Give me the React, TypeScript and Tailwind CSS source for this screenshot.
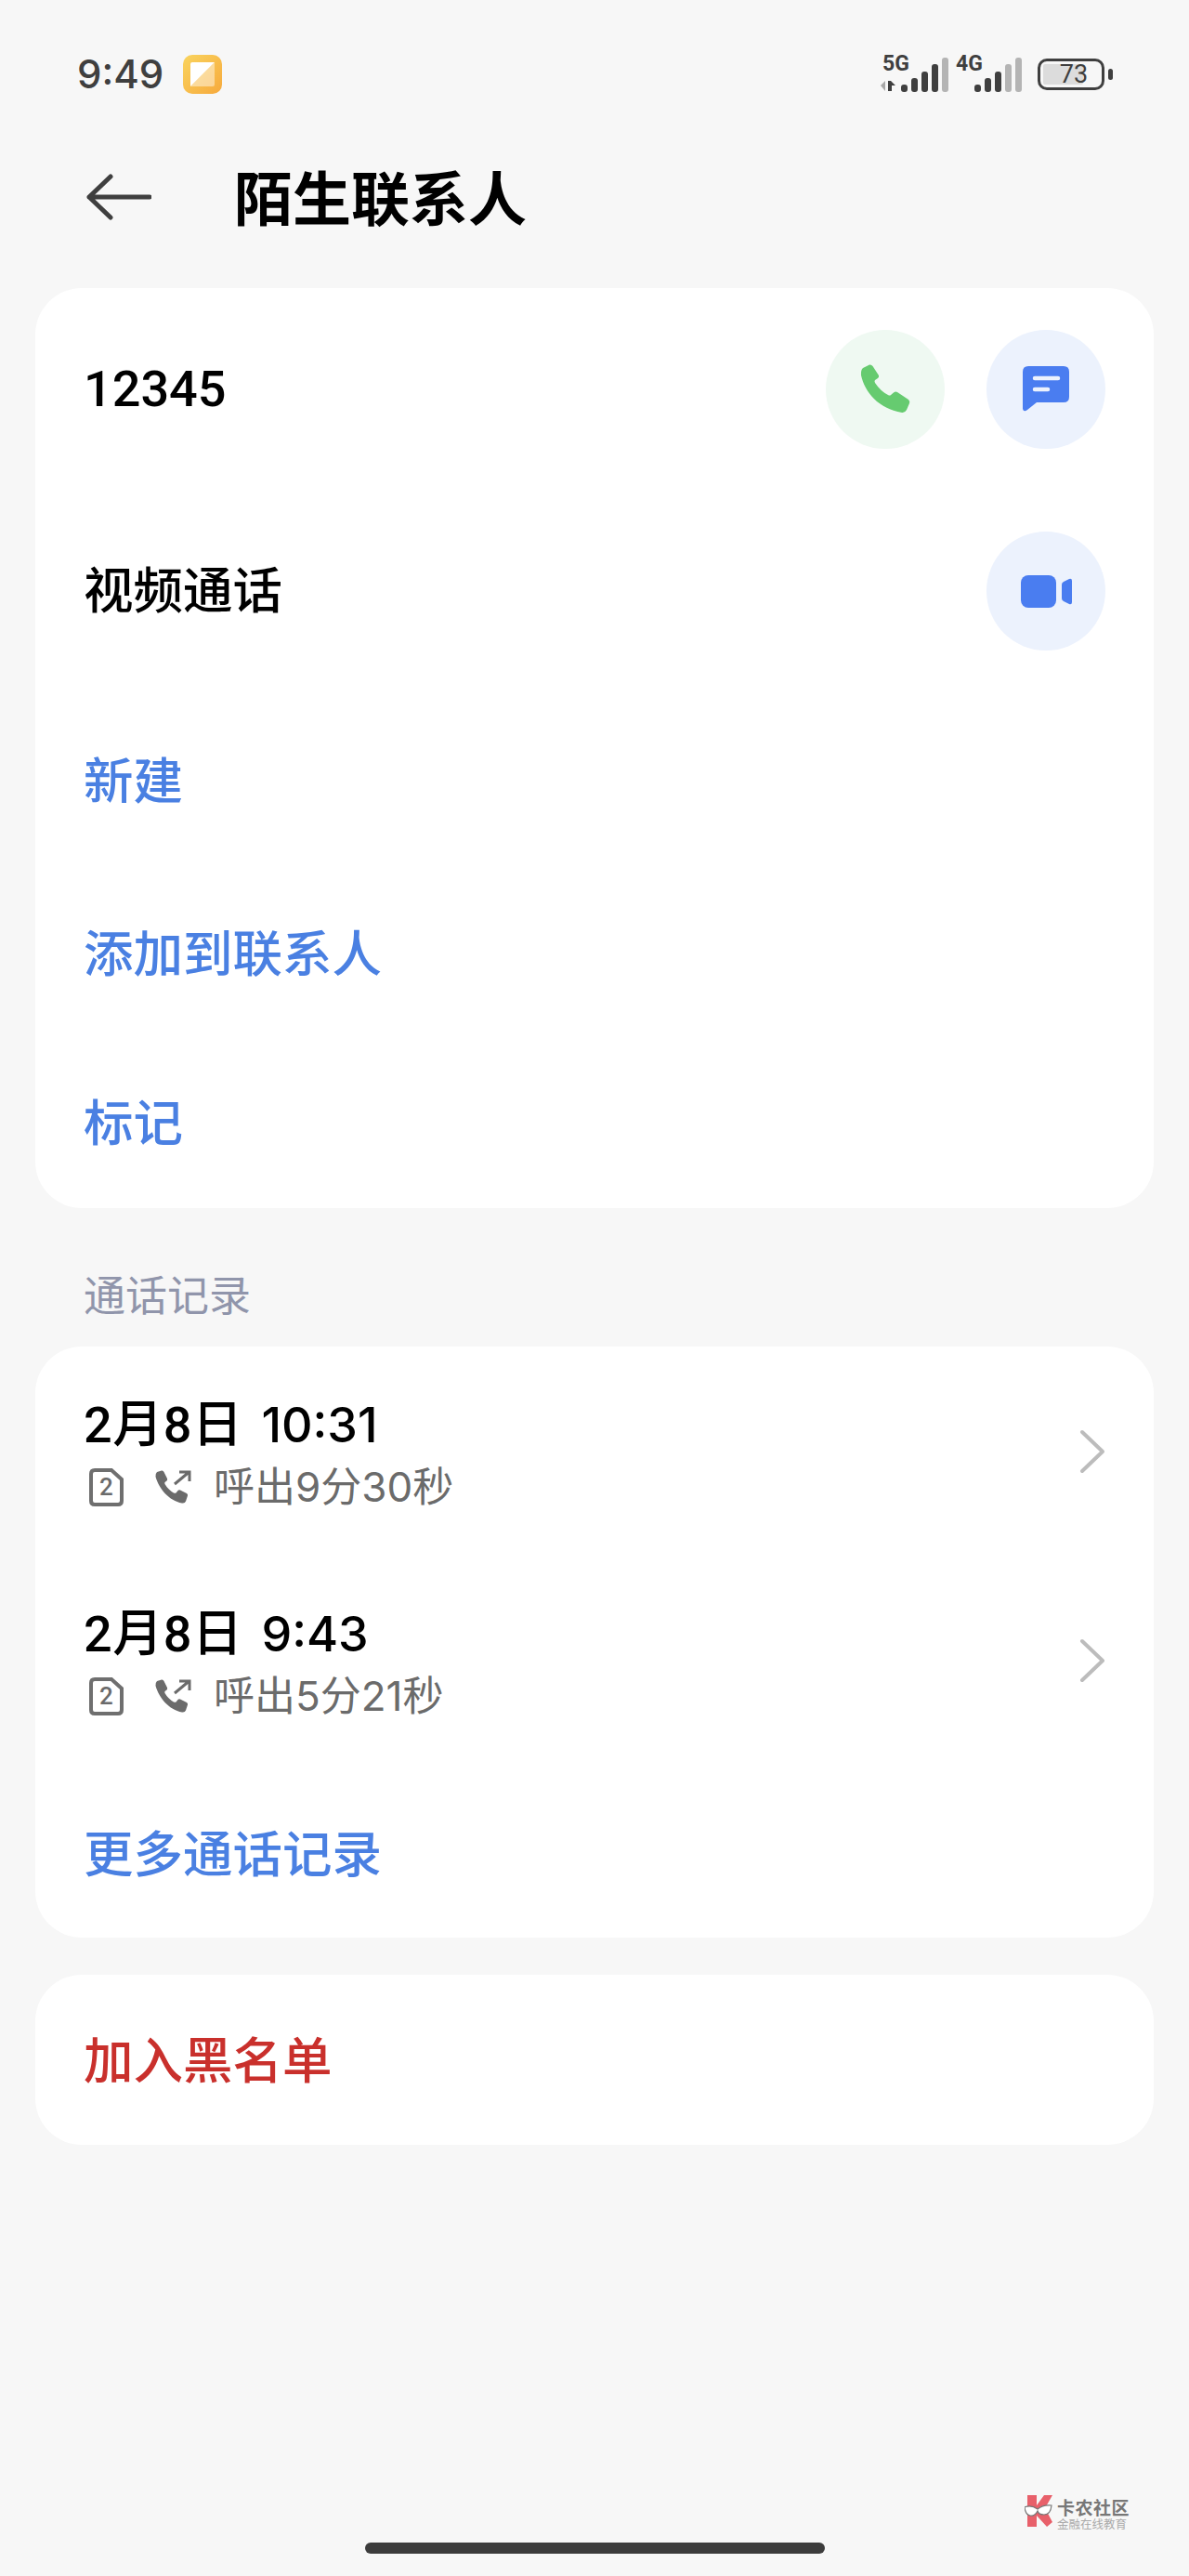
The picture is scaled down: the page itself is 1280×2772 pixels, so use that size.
const Phone = ({ className }: { className?: string }) => (
  <svg viewBox="0 0 54 53" className={className} fill="currentColor">
    <path d="M3 4L10 .5Q12 0 13.5 2L20 12Q20.5 14 19 15L16 17Q15 18 16 20Q22 29 30 33Q32 34 33 33L36 30.5Q38 29 40 30L52 38Q54 40 53 42L50 49Q48 52.5 45 52C20 48 5 30 1 12Q.5 6 3 4Z" />
  </svg>
);

const Circle = ({ tone, children }: { tone: string; children: React.ReactNode }) => (
  <div className={`flex h-[128px] w-[128px] items-center justify-center rounded-full ${tone}`}>{children}</div>
);

const Signal = ({ label, dark, arrows }: { label: string; dark: number; arrows?: boolean }) => {
  const bars = [
    { x: 23, y: 29 },
    { x: 34, y: 22 },
    { x: 45, y: 15 },
    { x: 56, y: 7 },
    { x: 67, y: 0 },
  ];
  return (
    <div className="relative h-[37px] w-[75px]">
      <span className="absolute left-[3px] top-[-5px] text-[23px] leading-[24px] font-bold text-[#3f3f3f]">{label}</span>
      <svg viewBox="0 0 75 37" className="absolute inset-0 h-full w-full">
        {arrows && (
          <>
            <path d="M6 25V36L1 30Z" fill="#a8a8a8" />
            <path d="M9 36V25H12L17 30H13V36Z" fill="#3f3f3f" />
          </>
        )}
        {bars.map((b, i) => (
          <rect key={i} x={b.x} y={b.y} width="7" height={37 - b.y} rx="3" fill={i < dark ? "#3f3f3f" : "#b4b4b4"} />
        ))}
      </svg>
    </div>
  );
};

const Battery = () => (
  <div className="flex items-center gap-[4px]">
    <div className="relative h-[34px] w-[72px] rounded-[10px] border-[3px] border-[#3f3f3f] p-[3px]">
      <div className="h-full w-[43px] rounded-[2px] bg-[#dcdcdc]" />
      <span className="absolute inset-0 flex items-center justify-center pl-[6px] text-[27px] leading-none text-[#3f3f3f]">73</span>
    </div>
    <div className="h-[12px] w-[5px] rounded-full bg-[#3f3f3f]" />
  </div>
);

const CallRow = ({ date, time, detail }: { date: string; time: string; detail: string }) => (
  <div className="flex h-[225px] items-start justify-between pl-[52px] pr-[52px] pt-[51px]">
    <div>
      <div className="flex h-[67px] items-center text-[54px] leading-[67px] font-medium tracking-[0.5px] text-black">
        <span>{date}</span>
        <span className="ml-[20px] font-['Inter','Roboto',sans-serif] text-[52px] tracking-normal">{time}</span>
      </div>
      <div className="flex h-[66px] items-center text-[44px] leading-[66px] text-[#6b6b6b]">
        <div className="relative ml-[6px] h-[41px] w-[37px]">
          <svg viewBox="0 0 37 41" className="h-full w-full" fill="none" stroke="#6f6f6f" strokeWidth="4">
            <path d="M6 2H24L35 12V35Q35 39 31 39H6Q2 39 2 35V6Q2 2 6 2Z" />
          </svg>
          <span className="absolute inset-0 flex items-center justify-center text-[26px] leading-none font-medium">2</span>
        </div>
        <svg viewBox="0 0 39 36" className="ml-[34px] h-[36px] w-[39px]" fill="#6b6b6b">
          <path d="M2 2L7 .5Q8.500 0 9.500 2L13 9Q13.500 10.500 12.500 11.500L10.500 13Q10 14 10.500 15Q14 21 20 24.500Q21.500 25 22.500 24.500L24.500 22Q25.500 21 27 21.500L34 25Q35.500 26 35 27.500L33 33.500Q32 36 29 35.500C15 33 4 20 .5 7Q0 4 2 2Z" />
          <path d="M21 15L36 2.500M26 2H37V12" fill="none" stroke="#6b6b6b" strokeWidth="3" />
        </svg>
        <span className="ml-[24px] font-['Inter','Noto_Sans_CJK_SC',sans-serif]">{detail}</span>
      </div>
    </div>
    <svg viewBox="0 0 28 48" className="mt-[38px] h-[48px] w-[28px]" fill="none" stroke="#bcbcbc" strokeWidth="4" strokeLinecap="round" strokeLinejoin="round">
      <path d="M3 3L25 24L3 45" />
    </svg>
  </div>
);

const ActionRow = ({ label, height }: { label: string; height: string }) => (
  <div className={`flex items-center pl-[52px] pt-[4px] text-[53.500px] font-medium text-[#4a80e2] ${height}`}>{label}</div>
);

export default function App() {
  return (
    <div className="relative flex h-[2772px] w-[1280px] flex-col overflow-hidden bg-[#f7f7f7] font-['Roboto','Noto_Sans_CJK_SC',sans-serif]">
      {/* status bar */}
      <div className="flex h-[160px] shrink-0 items-center justify-between pl-[83px] pr-[82px]">
        <div className="flex items-center gap-[21px]">
          <span className="font-['Inter','Roboto',sans-serif] text-[42px] leading-none font-medium text-[#3f3f3f]">9:49</span>
          <div className="flex h-[42px] w-[42px] items-center justify-center rounded-[10px] bg-gradient-to-br from-[#f9d45e] to-[#f6a93c]">
            <svg viewBox="0 0 26 26" className="h-[26px] w-[26px]">
              <path d="M0 2Q0 0 2 0H26L0 26Z" fill="#fff" />
              <path d="M26 0V24Q26 26 24 26H0Z" fill="#fff" opacity=".45" />
            </svg>
          </div>
        </div>
        <div className="flex items-center">
          <Signal label="5G" dark={4} arrows />
          <div className="ml-[4px]">
            <Signal label="4G" dark={3} />
          </div>
          <div className="ml-[16px]">
            <Battery />
          </div>
        </div>
      </div>

      {/* title */}
      <div className="flex h-[150px] shrink-0 items-center pb-[40px] pl-[93px]">
        <svg viewBox="0 0 70 50" className="mt-[-6px] h-[50px] w-[70px]" fill="none" stroke="#3f3f3f" strokeWidth="5" strokeLinecap="round" strokeLinejoin="round">
          <path d="M68 25H3M26 3L3 25L26 47" />
        </svg>
        <h1 className="ml-[89px] text-[63px] leading-none font-bold text-black">陌生联系人</h1>
      </div>

      <div className="flex flex-col px-[38px]">
        <div className="h-[990px] rounded-[50px] bg-white">
          <div className="flex h-[217px] items-center justify-between pl-[52px] pr-[52px]">
            <span className="text-[54px] font-medium text-black">12345</span>
            <div className="flex gap-[45px]">
              <Circle tone="bg-[#eff9f2]">
                <Phone className="h-[53px] w-[54px] text-[#66cb70]" />
              </Circle>
              <Circle tone="bg-[#ecf2fd]">
                <svg viewBox="0 0 50 49" className="h-[49px] w-[50px]">
                  <path d="M6 0H44Q50 0 50 6V33Q50 39 44 39H15L5 47Q1 50 0 46V6Q0 0 6 0Z" fill="#4a7df0" />
                  <path d="M13 13H38M13 25H27" stroke="#ecf2fd" strokeWidth="4.500" strokeLinecap="round" />
                </svg>
              </Circle>
            </div>
          </div>
          <div className="flex h-[218px] items-center justify-between pl-[52px] pr-[52px]">
            <span className="pt-[3px] text-[53.500px] font-medium text-black">视频通话</span>
            <Circle tone="bg-[#ecf2fd]">
              <svg viewBox="0 0 55 35" className="h-[35px] w-[55px]" fill="#4a7df0">
                <rect width="38" height="35" rx="8" />
                <path d="M44 10Q44 8 46 7L52 4Q55 3 55 6V29Q55 32 52 31L46 28Q44 27 44 25Z" />
              </svg>
            </Circle>
          </div>
          <ActionRow label="新建" height="h-[190px]" />
          <ActionRow label="添加到联系人" height="h-[182px]" />
          <ActionRow label="标记" height="h-[183px]" />
        </div>

        <div className="flex h-[149px] items-center pl-[52px] pt-[42px] text-[45px] text-[#9095ab]">通话记录</div>

        <div className="h-[636px] rounded-[50px] bg-white">
          <CallRow date="2月8日" time="10:31" detail="呼出9分30秒" />
          <CallRow date="2月8日" time="9:43" detail="呼出5分21秒" />
          <div className="flex h-[186px] items-center pl-[52px] pt-[10px] text-[53.500px] font-medium text-[#4a80e2]">更多通话记录</div>
        </div>

        <div className="mt-[40px] flex h-[183px] items-center rounded-[50px] bg-white pl-[52px] pt-[6px] text-[53.500px] font-medium text-[#c9302c]">加入黑名单</div>
      </div>

      {/* watermark */}
      <div className="absolute left-[1103px] top-[2685px] flex items-start gap-[5px]">
        <svg viewBox="0 0 30 34" className="h-[34px] w-[30px]">
          <path d="M3 0H13V11L21 0H30L22 14L30 29L24 34L13 22V34H3Z" fill="#e8606a" />
          <path d="M0 13Q7 10 14 15Q20 10 29 11Q28 21 21 21Q15 21 14 17Q11 23 6 22Q1 21 0 13Z" fill="#fff" stroke="#777" strokeWidth="1.200" />
        </svg>
        <div className="flex flex-col">
          <span className="mt-[5px] text-[19px] leading-[20px] font-bold tracking-[0.5px] text-[#777]">卡农社区</span>
          <span className="text-[12.5px] leading-[14px] text-[#aaa]">金融在线教育</span>
        </div>
      </div>

      {/* home indicator */}
      <div className="absolute bottom-[24px] left-[393px] h-[12px] w-[495px] rounded-full bg-[#3c3c3c]" />
    </div>
  );
}
